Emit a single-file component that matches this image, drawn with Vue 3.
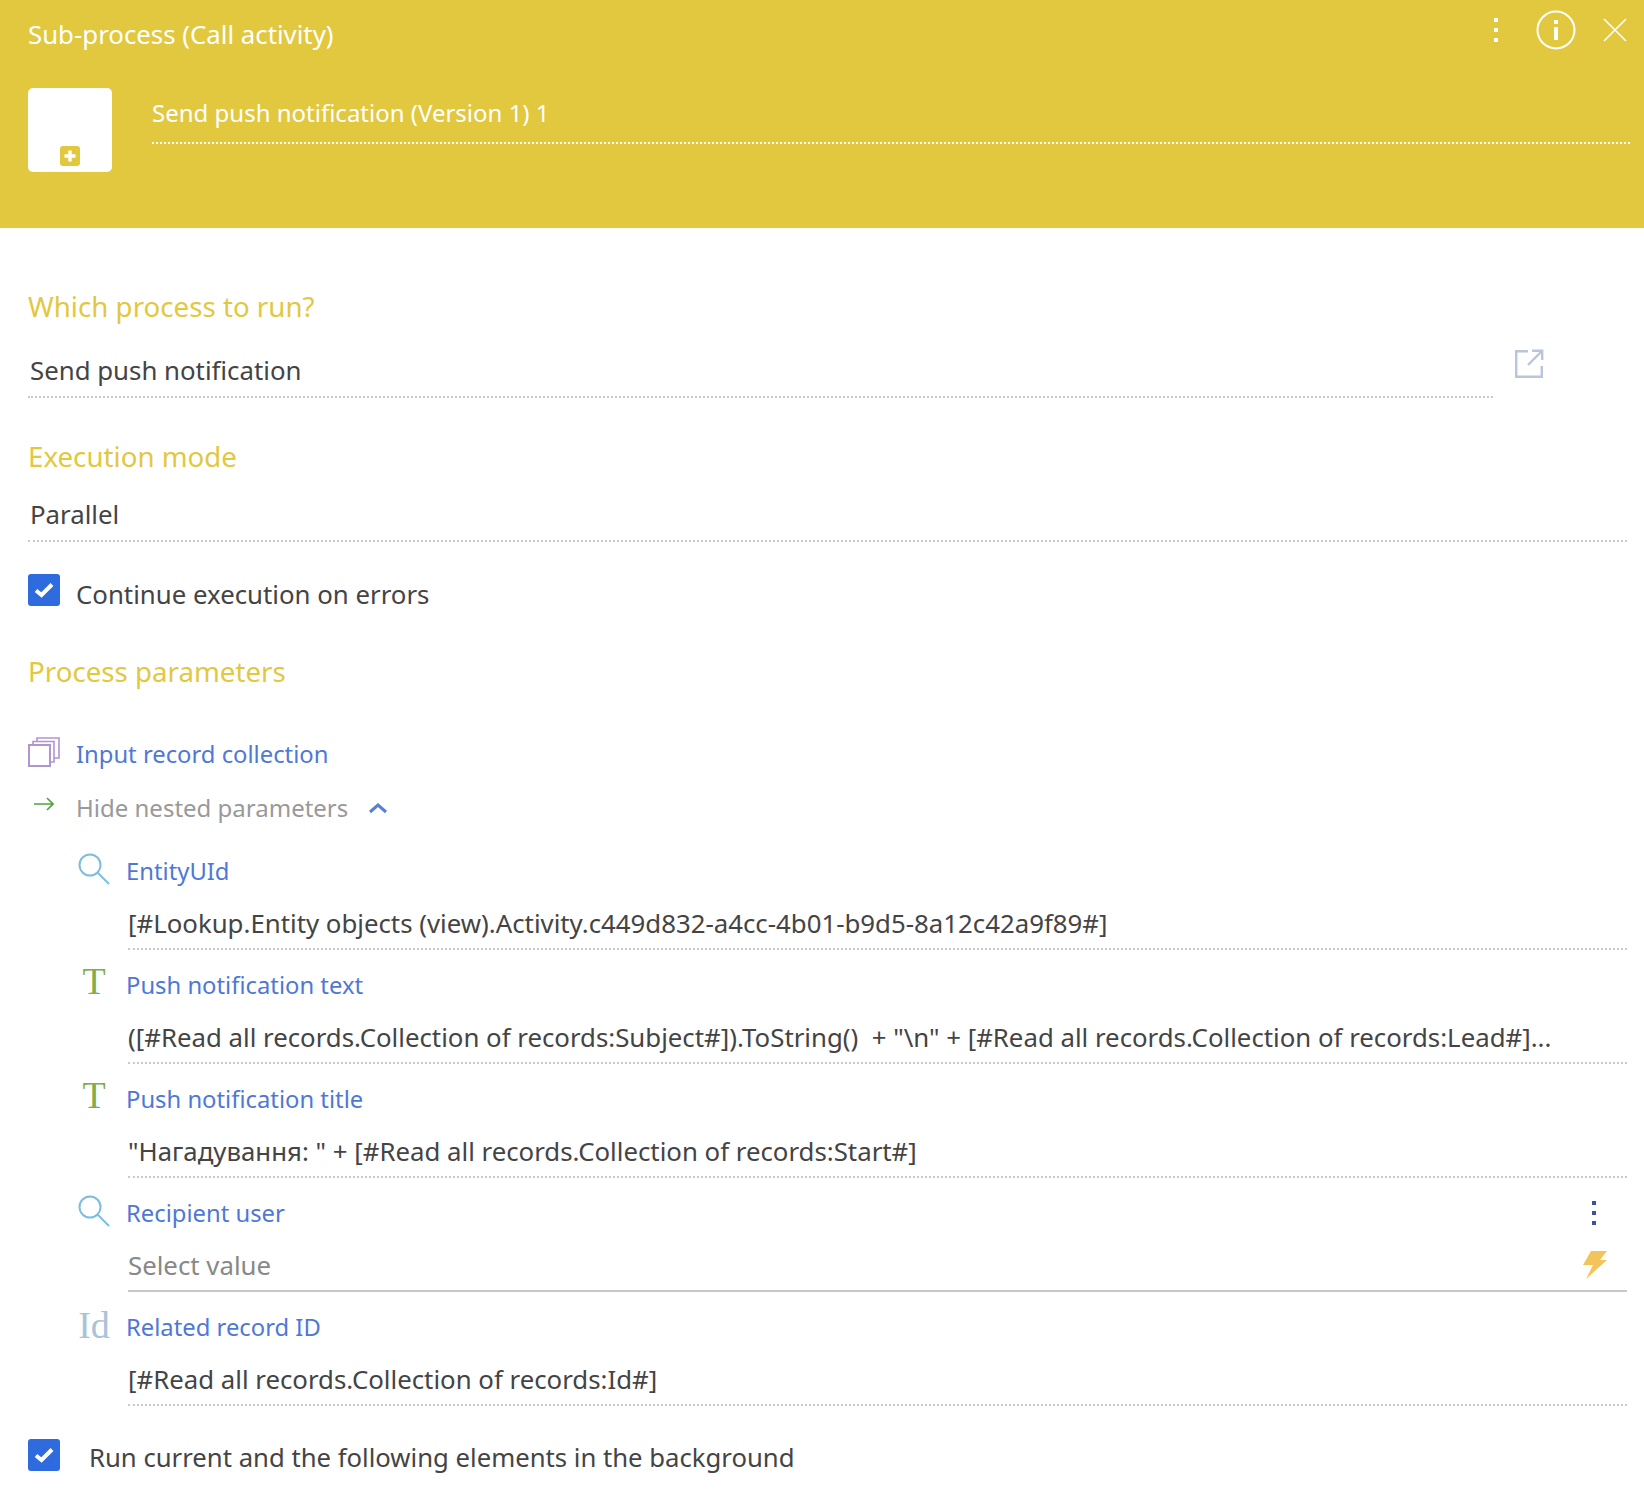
<template>
  <div class="panel">
    <header class="panel-head">
      <div class="head-top">
        <span class="head-title">Sub-process (Call activity)</span>
        <div class="head-actions">
          <span class="dots dots--white"><i></i><i></i><i></i></span>
          <svg class="info" width="40" height="40" viewBox="0 0 40 40">
            <circle cx="20" cy="20" r="18.5" fill="none" stroke="#fff" stroke-width="2" />
            <rect x="18" y="10" width="4" height="4" fill="#fff" />
            <rect x="18" y="17" width="4" height="13" fill="#fff" />
          </svg>
          <svg class="close" width="24" height="24" viewBox="0 0 24 24">
            <path d="M1 1 L23 23 M23 1 L1 23" stroke="#fff" stroke-width="1.6" fill="none" />
          </svg>
        </div>
      </div>
      <div class="head-main">
        <div class="image-box">
          <svg width="20" height="20" viewBox="0 0 20 20">
            <rect width="20" height="20" rx="3" fill="#e2c83f" />
            <path d="M10 4.5 V15.5 M4.5 10 H15.5" stroke="#fff" stroke-width="3.4" />
          </svg>
        </div>
        <div class="head-name">Send push notification (Version 1) 1</div>
      </div>
    </header>

    <main class="panel-body">
      <h3 class="section">Which process to run?</h3>
      <div class="process-row">
        <div class="value value--process">Send push notification</div>
        <svg class="open-link" width="30" height="30" viewBox="0 0 30 30" fill="none" stroke="#b9c5da" stroke-width="2.4">
          <path d="M14 2.2 H2.2 V27.8 H27.8 V17" />
          <path d="M14 16 L27 3 M18 1.8 H28.2 V11" />
        </svg>
      </div>

      <h3 class="section section--mode">Execution mode</h3>
      <div class="value value--mode">Parallel</div>

      <label class="check check--errors">
        <span class="box">
          <svg width="20" height="16" viewBox="0 0 20 16"><path d="M2 8.5 L7.5 13 L18 2.5" fill="none" stroke="#fff" stroke-width="4" /></svg>
        </span>
        Continue execution on errors
      </label>

      <h3 class="section section--params">Process parameters</h3>

      <div class="param-root">
        <svg class="stack" width="32" height="30" viewBox="0 0 32 30" fill="none" stroke="#b095cf" stroke-width="1.6">
          <rect x="1" y="8" width="21" height="21" stroke-width="2" />
          <path d="M5 8 V4.5 H26 V25 H22" />
          <path d="M9 4.5 V1 H31 V21 H26" />
        </svg>
        <span class="param-name">Input record collection</span>
      </div>

      <div class="toggle-row">
        <svg class="arrow" width="20" height="14" viewBox="0 0 20 14" fill="none" stroke="#4fa53a" stroke-width="1.6">
          <path d="M0 7 H19 M13 1 L19 7 L13 13" />
        </svg>
        <span class="toggle-text">Hide nested parameters</span>
        <svg class="chevron" width="20" height="12" viewBox="0 0 20 12" fill="none" stroke="#5b7fd0" stroke-width="3">
          <path d="M2 10 L10 3 L18 10" />
        </svg>
      </div>

      <div class="params">
        <div v-for="param in params" :key="param.name" class="param">
          <div class="param-head">
            <span class="param-icon">
              <svg v-if="param.type === 'lookup'" width="32" height="32" viewBox="0 0 32 32" fill="none" stroke="#7cbde0" stroke-width="2">
                <circle cx="12" cy="12" r="10.5" />
                <path d="M19.5 19.5 L31 31" />
              </svg>
              <span v-else-if="param.type === 'text'" class="glyph glyph--text">T</span>
              <span v-else class="glyph glyph--id">Id</span>
            </span>
            <span class="param-name">{{ param.name }}</span>
            <span v-if="param.menu" class="dots dots--blue"><i></i><i></i><i></i></span>
          </div>
          <div class="param-value" :class="{ 'param-value--empty': !param.value }">
            <span class="param-text">{{ param.value || 'Select value' }}</span>
            <svg v-if="!param.value" class="bolt" width="24" height="28" viewBox="0 0 24 28">
              <path d="M8 0 H24 L17 9 H24 L3 28 L10 14 H0 Z" fill="#f3c35c" />
            </svg>
          </div>
        </div>
      </div>

      <label class="check check--background">
        <span class="box">
          <svg width="20" height="16" viewBox="0 0 20 16"><path d="M2 8.5 L7.5 13 L18 2.5" fill="none" stroke="#fff" stroke-width="4" /></svg>
        </span>
        Run current and the following elements in the background
      </label>
    </main>
  </div>
</template>

<script setup>
const params = [
  { name: 'EntityUId', type: 'lookup', value: '[#Lookup.Entity objects (view).Activity.c449d832-a4cc-4b01-b9d5-8a12c42a9f89#]' },
  { name: 'Push notification text', type: 'text', value: '([#Read all records.Collection of records:Subject#]).ToString()  + "\\n" + [#Read all records.Collection of records:Lead#]...' },
  { name: 'Push notification title', type: 'text', value: '"Нагадування: " + [#Read all records.Collection of records:Start#]' },
  { name: 'Recipient user', type: 'lookup', value: '', menu: true },
  { name: 'Related record ID', type: 'id', value: '[#Read all records.Collection of records:Id#]' },
]
</script>

<style scoped>
.panel {
  width: 1644px;
  height: 1508px;
  background: #fff;
  color: #444;
  font-family: "Noto Sans", sans-serif;
  font-size: 25.8px;
  overflow: hidden;
}

.panel-head {
  height: 228px;
  box-sizing: border-box;
  padding: 0 14px 0 28px;
  background: #e2c83f;
  color: #fff;
}

.head-top {
  display: flex;
  justify-content: space-between;
  align-items: center;
  height: 68px;
}

.head-title {
  font-size: 25.8px;
  line-height: 34px;
}

.head-actions {
  display: flex;
  align-items: center;
  gap: 27px;
  margin-top: -8px;
  margin-right: 3px;
}

.dots {
  display: flex;
  flex-direction: column;
  gap: 6px;
}

.dots i {
  display: block;
  width: 4px;
  height: 4px;
  background: #fff;
}

.dots--white {
  margin-right: 11px;
}

.dots--blue {
  margin-left: auto;
  margin-right: 31px;
}

.dots--blue i {
  background: #3f4fa3;
}

.head-main {
  display: flex;
  gap: 40px;
  margin-top: 20px;
}

.image-box {
  display: flex;
  align-items: flex-end;
  justify-content: center;
  width: 84px;
  height: 84px;
  padding-bottom: 6px;
  box-sizing: border-box;
  background: #fff;
  border-radius: 5px;
}

.head-name {
  flex: 1;
  height: 56px;
  font-size: 24px;
  line-height: 50px;
  box-sizing: border-box;
  border-bottom: 2px dotted #fff;
}

.panel-body {
  padding: 0 17px 0 28px;
}

.section {
  margin: 0;
  color: #e2c83f;
  font-size: 27.7px;
  font-weight: 400;
  line-height: 36px;
}

.panel-body > .section:first-child {
  margin-top: 60px;
}

.process-row {
  display: flex;
  gap: 21px;
}

.value {
  line-height: 34px;
  padding: 29px 2px 9px;
  border-bottom: 2px dotted #c9c9c9;
}

.value--process {
  flex: 0 0 1465px;
  box-sizing: border-box;
}

.open-link {
  margin-top: 25px;
}

.section--mode {
  margin-top: 40px;
}

.value--mode {
  padding-top: 23px;
}

.check {
  display: flex;
  align-items: center;
  gap: 16px;
  line-height: 34px;
}

.check--errors {
  margin-top: 35px;
}

.check--background {
  margin-top: 17px;
  gap: 29px;
  font-size: 25.7px;
}

.box {
  display: flex;
  align-items: center;
  justify-content: center;
  width: 32px;
  height: 32px;
  margin-top: -8px;
  border-radius: 3px;
  background: #2d6bde;
}

.check--background .box {
  margin-top: -6px;
}

.section--params {
  margin-top: 42px;
}

.param-root {
  display: flex;
  align-items: center;
  gap: 16px;
  margin-top: 48px;
}

.param-name {
  color: #4f78d6;
  font-size: 23.8px;
  line-height: 34px;
}

.stack {
  margin-top: -4px;
}

.toggle-row {
  display: flex;
  align-items: center;
  margin-top: 20px;
}

.arrow {
  margin: -8px 22px 0 6px;
}

.toggle-text {
  color: #999;
  font-size: 24px;
  line-height: 34px;
}

.chevron {
  margin-left: 20px;
}

.params {
  margin-top: 29px;
  padding-left: 50px;
}

.param {
  height: 114px;
}

.param-head {
  display: flex;
  align-items: center;
  height: 34px;
  margin-bottom: 18px;
}

.param-icon {
  display: flex;
  justify-content: center;
  width: 32px;
  margin-right: 16px;
  margin-top: -4px;
  height: 32px;
}

.glyph {
  font-family: "Liberation Serif", serif;
  font-size: 38px;
  line-height: 32px;
}

.glyph--text {
  color: #7fae4c;
  margin-top: -2px;
}

.glyph--id {
  color: #a9c3d8;
}

.param-value {
  display: flex;
  justify-content: space-between;
  align-items: flex-start;
  height: 42px;
  margin-left: 50px;
  border-bottom: 2px dotted #c9c9c9;
}

.param-value--empty {
  border-bottom: 2px solid #c8c8c8;
}

.param-text {
  line-height: 34px;
  white-space: pre;
}

.param-value--empty .param-text {
  color: #888;
}

.bolt {
  margin-right: 20px;
  margin-top: 3px;
}
</style>

<style>
html, body {
  background: #fff;
}
</style>
